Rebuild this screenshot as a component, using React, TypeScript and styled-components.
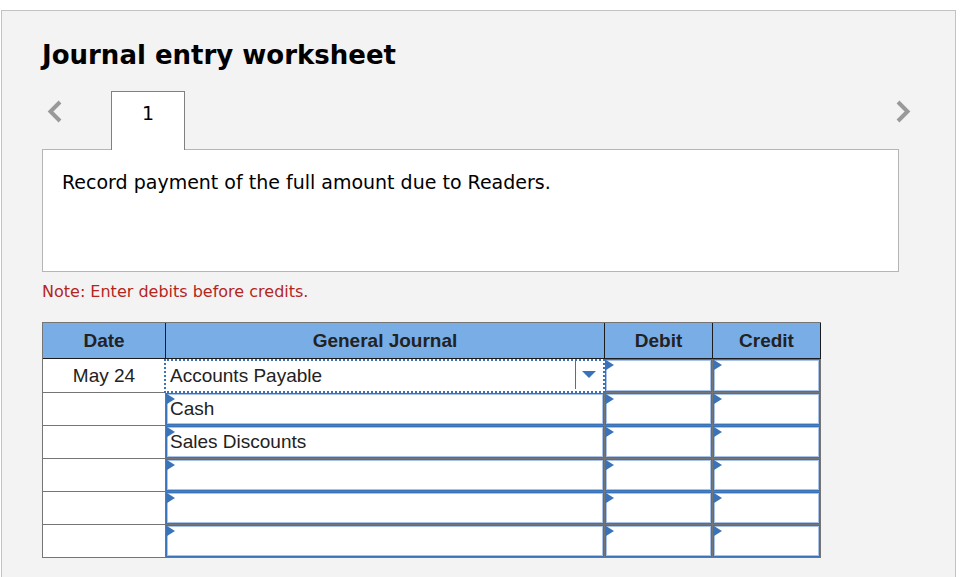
import React from "react";
import styled, { createGlobalStyle, css } from "styled-components";

const GlobalStyle = createGlobalStyle`
  *, *::before, *::after { box-sizing: border-box; }
  html { background: #ffffff; }
  body {
    margin: 0;
    color: #000000;
    font-family: "DejaVu Sans", Verdana, sans-serif;
  }
  #root { display: flow-root; }
`;

const Panel = styled.main`
  min-height: calc(100vh - 10px);
  margin: 10px 14px 0 1px;
  padding: 24px 56px 19px 40px;
  background: #f3f3f3;
  border: 1px solid #c2c2c2;
  border-bottom: 0;
`;

const Title = styled.h1`
  margin: 0;
  font-size: 26px;
  line-height: 40px;
  font-weight: 700;
`;

const TabBar = styled.nav`
  display: flex;
  align-items: flex-start;
  margin: 16px -12px 0 5px;
`;

const StepButton = styled.button`
  display: flex;
  margin: 8px 0 0;
  padding: 0;
  border: 0;
  background: none;
`;

const Tab = styled.button`
  position: relative;
  width: 74px;
  height: 59px;
  margin: 0 auto -1px 49px;
  padding: 0 0 16px;
  border: 1px solid #808080;
  border-bottom: 0;
  background: #ffffff;
  color: #000000;
  font: 19px/24px "DejaVu Sans", Verdana, sans-serif;
`;

const Instruction = styled.section`
  min-height: 123px;
  padding: 20px 19px;
  background: #ffffff;
  border: 1px solid #b5b5b5;
  font-size: 19px;
  line-height: 24px;
`;

const Note = styled.p`
  margin: 8px 0 18px;
  color: #b3261e;
  font-size: 16px;
  line-height: 24px;
`;

const Journal = styled.table`
  width: calc(100% - 78px);
  table-layout: fixed;
  border-collapse: separate;
  border-spacing: 0;
  border: 1px solid #757575;
  border-width: 1px 0 0 1px;
  background: #ffffff;
  color: #222222;
  font-family: "Liberation Sans", Arial, sans-serif;
  font-size: 19px;
`;

const HeadCell = styled.th<{ $width?: number }>`
  width: ${({ $width }) => ($width ? `${$width}px` : "auto")};
  height: 36px;
  padding: 0;
  background: #79ade6;
  border: 1px solid #1c1c1c;
  border-width: 0 1px 1px 0;
`;

const Cell = styled.td<{ $tall?: boolean }>`
  position: relative;
  height: ${({ $tall }) => ($tall ? 34 : 33)}px;
  padding: 0;
  border: 1px solid #757575;
  border-width: 0 1px 1px 0;
  text-align: center;
`;

const field = css`
  display: block;
  width: 100%;
  height: 32px;
  margin: 0;
  padding: 0 3px;
  appearance: none;
  border: 1px solid #3b73b9;
  border-radius: 0;
  outline: 1px solid #a9c4e8;
  outline-offset: -2px;
  background: #ffffff;
  color: #222222;
  font: 19px/24px "Liberation Sans", Arial, sans-serif;
`;

const AccountSelect = styled.select`
  ${field}
`;

const AmountInput = styled.input<{ $tall: boolean }>`
  ${field}
  height: ${({ $tall }) => ($tall ? 33 : 32)}px;
`;

const ActiveField = styled.div`
  position: absolute;
  inset: 0 -1px -1px -2px;
  display: flex;
  border: 2px dotted #3b73b9;
  background: #ffffff;
`;

const ActiveSelect = styled(AccountSelect)`
  height: 100%;
  padding: 0 4px;
  border: 0;
  outline: 0;
`;

const Arrow = styled.span`
  position: absolute;
  inset: 0 0 2px auto;
  display: flex;
  align-items: center;
  width: 28px;
  padding: 0 0 2px 6px;
  border-left: 1px solid #3b73b9;
  pointer-events: none;
`;

const CornerMark = styled.svg`
  position: absolute;
  top: 1px;
  left: 1px;
  pointer-events: none;
`;

const accounts = ["", "Accounts Payable", "Cash", "Sales Discounts"];

const entries = [
  { date: "May 24", account: "Accounts Payable" },
  { date: "", account: "Cash" },
  { date: "", account: "Sales Discounts" },
  { date: "", account: "" },
  { date: "", account: "" },
  { date: "", account: "" },
];

const options = accounts.map((name) => <option key={name}>{name}</option>);

function Chevron({ d }: { d: string }) {
  return (
    <svg
      width="15"
      height="25"
      viewBox="0 0 15 25"
      fill="none"
      stroke="#999999"
      strokeWidth="4"
      aria-hidden="true"
    >
      <path d={d} />
    </svg>
  );
}

function Corner() {
  return (
    <CornerMark width="8" height="10" viewBox="0 0 8 10" aria-hidden="true">
      <path d="M0 0L8 5L0 10Z" fill="#3b73b9" />
    </CornerMark>
  );
}

export default function App() {
  return (
    <>
      <GlobalStyle />
      <Panel>
        <Title>Journal entry worksheet</Title>
        <TabBar aria-label="Journal entries">
          <StepButton type="button" aria-label="Previous entry">
            <Chevron d="M13 3L3.5 12.5L13 22" />
          </StepButton>
          <Tab type="button" aria-current="step">1</Tab>
          <StepButton type="button" aria-label="Next entry">
            <Chevron d="M2 3L11.5 12.5L2 22" />
          </StepButton>
        </TabBar>
        <Instruction>Record payment of the full amount due to Readers.</Instruction>
        <Note>Note: Enter debits before credits.</Note>
        <Journal>
          <thead>
            <tr>
              <HeadCell scope="col" $width={123}>Date</HeadCell>
              <HeadCell scope="col">General Journal</HeadCell>
              <HeadCell scope="col" $width={108}>Debit</HeadCell>
              <HeadCell scope="col" $width={108}>Credit</HeadCell>
            </tr>
          </thead>
          <tbody>
            {entries.map((entry, i) => {
              const active = i === 0;
              return (
                <tr key={i}>
                  <Cell $tall={active}>{entry.date}</Cell>
                  <Cell $tall={active}>
                    {active ? (
                      <ActiveField>
                        <ActiveSelect aria-label="Account, line 1" defaultValue={entry.account}>
                          {options}
                        </ActiveSelect>
                        <Arrow>
                          <svg width="14" height="7" viewBox="0 0 14 7" aria-hidden="true">
                            <path d="M0 0H14L7 7Z" fill="#3b73b9" />
                          </svg>
                        </Arrow>
                      </ActiveField>
                    ) : (
                      <>
                        <AccountSelect aria-label={`Account, line ${i + 1}`} defaultValue={entry.account}>
                          {options}
                        </AccountSelect>
                        <Corner />
                      </>
                    )}
                  </Cell>
                  {["Debit", "Credit"].map((side) => (
                    <Cell key={side} $tall={active}>
                      <AmountInput $tall={active} type="text" aria-label={`${side}, line ${i + 1}`} />
                      <Corner />
                    </Cell>
                  ))}
                </tr>
              );
            })}
          </tbody>
        </Journal>
      </Panel>
    </>
  );
}
